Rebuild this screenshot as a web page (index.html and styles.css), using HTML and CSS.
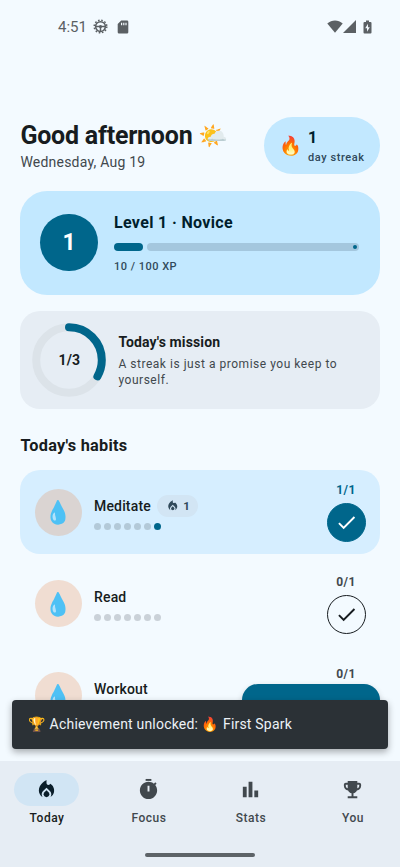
FILE: index.html
```html
<!DOCTYPE html>
<html lang="en">
<head>
<meta charset="utf-8">
<title>Today</title>
<link rel="stylesheet" href="styles.css">
</head>
<body>
<svg class="defs" width="0" height="0">
  <symbol id="fire" viewBox="0 0 24 24"><path d="M12 12.9l-2.13 2.09c-.56.56-.87 1.29-.87 2.07C9 18.68 10.35 20 12 20s3-1.32 3-2.94c0-.78-.31-1.52-.87-2.07L12 12.9z"/><path d="M16 6l-.44.55C14.38 8.02 12 7.19 12 5.3V2S4 6 4 13c0 2.92 1.56 5.47 3.89 6.86-.56-.79-.89-1.76-.89-2.8 0-1.32.52-2.56 1.47-3.5L12 10.1l3.53 3.47c.95.93 1.47 2.17 1.47 3.5 0 1.02-.31 1.96-.85 2.75 1.89-1.15 3.29-3.06 3.71-5.3.66-3.55-1.07-6.9-3.86-8.52z"/></symbol>
  <symbol id="check" viewBox="0 0 24 24"><path d="M9 16.17L4.83 12l-1.42 1.41L9 19 21 7l-1.41-1.41z"/></symbol>
</svg>
<div class="screen">
  <header class="status">
    <span class="clock">4:51</span>
    <svg class="gear" viewBox="0 0 16 16"><circle cx="8" cy="8" r="5.2" fill="none" stroke="currentColor" stroke-width="1.6"/><circle cx="8" cy="8" r="6.7" fill="none" stroke="currentColor" stroke-width="1.6" stroke-dasharray="1.7 1.808"/><path d="M3 7.2h10v1.6H8.800v4.400H7.200V8.800H3z"/><circle cx="8" cy="8" r="1.7"/></svg>
    <svg class="sd" viewBox="0 0 12 14"><path fill-rule="evenodd" d="M4.2.5H10A1.3 1.3 0 0 1 11.300 1.800V12.200A1.300 1.300 0 0 1 10 13.500H2A1.300 1.300 0 0 1 .7 12.200V4zM4 2.800V5.200H5.200V2.800zM6.200 2.800V5.200H7.400V2.800zM8.400 2.800V5.200H9.600V2.800z"/></svg>
    <span class="grow"></span>
    <svg class="wifi" viewBox="0 0 16 13"><path d="M.3 3.400C4.800-.5 11.200-.5 15.700 3.400L8 12.800z"/></svg>
    <svg class="signal" viewBox="0 0 13 13"><path d="M13 0V13H0z"/></svg>
    <svg class="battery" viewBox="0 0 9 14"><path fill-rule="evenodd" d="M3 .5H6V2H7.500A1 1 0 0 1 8.500 3V12.500A1 1 0 0 1 7.500 13.500H1.500A1 1 0 0 1 .5 12.500V3A1 1 0 0 1 1.500 2H3zM5 3.800L2.200 8.300H4V11.700L6.800 7.200H5z"/></svg>
  </header>
  <main class="content">
    <section class="greeting">
      <div>
        <h1>Good afternoon <span class="emoji">🌤️</span></h1>
        <p class="date">Wednesday, Aug 19</p>
      </div>
      <div class="streak">
        <span class="emoji streak-fire">🔥</span>
        <div><div class="streak-num">1</div><div class="streak-label">day streak</div></div>
      </div>
    </section>
    <section class="level">
      <div class="level-badge">1</div>
      <div class="level-info">
        <h2>Level 1 · Novice</h2>
        <div class="bar"><span class="bar-fill"></span><span class="bar-track"><i></i></span></div>
        <p class="xp">10 / 100 XP</p>
      </div>
    </section>
    <section class="mission">
      <div class="ring">
        <svg viewBox="0 0 74 74"><circle class="ring-track" cx="37" cy="37" r="32.800"/><circle class="ring-fill" cx="37" cy="37" r="32.800" pathLength="3" stroke-dasharray="1 2" transform="rotate(-90 37 37)"/></svg>
        <span>1/3</span>
      </div>
      <div class="mission-text">
        <h3>Today's mission</h3>
        <p>A streak is just a promise you keep to yourself.</p>
      </div>
    </section>
    <h2 class="habits-title">Today's habits</h2>
    <section class="habits">
      <article class="habit done">
        <div class="avatar emoji">💧</div>
        <div class="habit-main">
          <div class="habit-name">Meditate <span class="chip"><svg><use href="#fire"/></svg>1</span></div>
          <div class="dots"><i></i><i></i><i></i><i></i><i></i><i></i><i class="on"></i></div>
        </div>
        <div class="habit-side"><span>1/1</span><div class="tick"><svg><use href="#check"/></svg></div></div>
      </article>
      <article class="habit">
        <div class="avatar emoji">💧</div>
        <div class="habit-main">
          <div class="habit-name">Read</div>
          <div class="dots"><i></i><i></i><i></i><i></i><i></i><i></i><i></i></div>
        </div>
        <div class="habit-side"><span>0/1</span><div class="tick"><svg><use href="#check"/></svg></div></div>
      </article>
      <article class="habit">
        <div class="avatar emoji">💧</div>
        <div class="habit-main">
          <div class="habit-name">Workout</div>
          <div class="dots"><i></i><i></i><i></i><i></i><i></i><i></i><i></i></div>
        </div>
        <div class="habit-side"><span>0/1</span></div>
      </article>
    </section>
    <div class="fab"></div>
    <div class="snackbar"><span class="emoji">🏆</span> Achievement unlocked: <span class="emoji">🔥</span> First Spark</div>
  </main>
  <nav class="nav">
    <div class="tabs">
      <a class="tab active"><span class="pill"><svg><use href="#fire"/></svg></span>Today</a>
      <a class="tab"><span class="pill"><svg viewBox="0 0 24 24"><path d="M9 1h6v2H9z"/><path d="M19.030 7.390l1.420-1.420c-.43-.51-.9-.99-1.410-1.410l-1.420 1.420C16.070 4.740 14.120 4 12 4c-4.970 0-9 4.030-9 9s4.020 9 9 9 9-4.030 9-9c0-2.120-.74-4.070-1.970-5.610zM13 14h-2V8h2v6z"/></svg></span>Focus</a>
      <a class="tab"><span class="pill"><svg viewBox="0 0 24 24"><path d="M4 9h4v11H4zM16 13h4v7h-4zM10 4h4v16h-4z"/></svg></span>Stats</a>
      <a class="tab"><span class="pill"><svg viewBox="0 0 24 24"><path d="M19 5h-2V3H7v2H5c-1.100 0-2 .9-2 2v1c0 2.550 1.920 4.630 4.390 4.940.63 1.500 1.980 2.630 3.610 2.960V19H7v2h10v-2h-4v-3.100c1.630-.33 2.980-1.460 3.610-2.960C19.080 12.630 21 10.550 21 8V7c0-1.100-.9-2-2-2zM5 8V7h2v3.820C5.840 10.400 5 9.300 5 8zm14 0c0 1.300-.84 2.400-2 2.820V7h2v1z"/></svg></span>You</a>
    </div>
    <div class="handle"></div>
  </nav>
</div>
</body>
</html>
```
FILE: styles.css
```css
* { box-sizing: border-box; margin: 0; padding: 0; }
body { font-family: Roboto, "Liberation Sans", sans-serif; color: #171c20; background: #f3faff; }
svg { fill: currentColor; display: block; }
.defs { position: absolute; }
.emoji { font-family: "Noto Color Emoji", Roboto, sans-serif; }
.screen { width: 400px; height: 867px; display: flex; flex-direction: column; overflow: hidden; }

.status { height: 53px; flex: none; display: flex; align-items: center; padding: 0 28px 0 58px; color: #5b6064; }
.clock { font-size: 15px; width: 34.500px; line-height: 18px; }
.gear { width: 15px; height: 15px; }
.sd { width: 12px; height: 14px; margin-left: 9px; }
.grow { flex: 1; }
.wifi { width: 16px; height: 13px; }
.signal { width: 13px; height: 13px; margin-left: 0; }
.battery { width: 9px; height: 14px; margin-left: 7px; }

.content { flex: 1; min-height: 0; position: relative; padding: 64px 20.400px 0; overflow: hidden; }
.greeting { display: flex; justify-content: space-between; height: 57px; }
h1 { font-size: 25px; line-height: 31px; font-weight: 700; letter-spacing: -.23px; margin-top: 2.500px; white-space: nowrap; }
h1 .emoji { font-size: 24px; }
.date { font-size: 14px; line-height: 20px; color: #41484d; letter-spacing: .22px; margin-top: .500px; }
.streak { width: 116px; height: 57px; border-radius: 28.500px; background: #c2e8ff; display: flex; align-items: center; padding-left: 15.500px; gap: 8px; }
.streak-fire { font-size: 18.500px; width: 21px; }
.streak-num { font-size: 16px; line-height: 22px; font-weight: 700; color: #001e2c; padding-top: 1px; }
.streak-label { font-size: 11px; line-height: 17px; font-weight: 500; letter-spacing: .55px; color: #30495a; white-space: nowrap; }

.level { height: 104px; margin-top: 16.500px; border-radius: 27px; background: #c2e8ff; display: flex; align-items: center; padding: 0 21px 0 20px; gap: 16px; color: #001e2c; }
.level-badge { width: 57.500px; height: 57.500px; border-radius: 50%; background: #00668b; color: #fff; font-size: 23px; font-weight: 700; display: grid; place-items: center; }
.level-info { flex: 1; }
.level h2 { font-size: 16px; line-height: 23px; font-weight: 700; letter-spacing: .35px; }
.bar { display: flex; gap: 4px; margin: 9px 0 8px; }
.bar-fill { width: 29px; height: 8px; border-radius: 4px; background: #00668b; }
.bar-track { flex: 1; height: 8px; border-radius: 4px; background: #a4c7de; display: flex; justify-content: flex-end; align-items: center; padding-right: 2px; }
.bar-track i { width: 4px; height: 4px; border-radius: 50%; background: #00668b; }
.xp { font-size: 11px; line-height: 15px; font-weight: 500; letter-spacing: .5px; color: #30495a; }

.mission { height: 98px; margin-top: 16.200px; border-radius: 20px; background: #e6edf4; display: flex; align-items: center; padding: 0 12px; gap: 12px; }
.ring { width: 74px; height: 74px; display: grid; place-items: center; flex: none; font-size: 14px; font-weight: 700; letter-spacing: .2px; }
.ring > * { grid-area: 1 / 1; }
.ring svg { width: 74px; height: 74px; }
.ring circle { fill: none; stroke-width: 8; stroke: #dce3e9; }
.ring .ring-fill { stroke: #00668b; stroke-linecap: round; }
.mission h3 { font-size: 14px; line-height: 20px; font-weight: 700; letter-spacing: .13px; }
.mission p { font-size: 12px; line-height: 16px; letter-spacing: .53px; color: #41484d; margin-top: 4px; }

.habits-title { font-size: 16.300px; line-height: 24px; font-weight: 700; letter-spacing: .25px; margin-top: 25px; }
.habits { margin-top: 12.500px; display: flex; flex-direction: column; gap: 8px; }
.habit { height: 83.800px; flex: none; border-radius: 20px; display: flex; align-items: center; padding: 0 14px 0 14.600px; }
.habit.done { background: #d6eeff; }
.avatar { width: 47px; height: 47px; border-radius: 50%; background: #f0ddd2; display: grid; place-items: center; font-size: 22.500px; }
.done .avatar { background: #dad4d2; }
.habit-main { margin-left: 12px; flex: 1; }
.habit-name { height: 22px; font-size: 14px; font-weight: 500; letter-spacing: .17px; display: flex; align-items: center; gap: 6.500px; }
.chip { height: 22px; width: 41px; border-radius: 11px; background: #d2e5f4; display: flex; align-items: center; justify-content: center; gap: 4px; font-size: 11.500px; font-weight: 700; color: #30495a; }
.chip svg { width: 13.500px; height: 13.500px; }
.dots { display: flex; gap: 3px; margin-top: 6px; }
.dots i { width: 7px; height: 7px; border-radius: 50%; background: #cad1d8; }
.done .dots i { background: #b3c9d8; }
.done .dots .on { background: #00668b; }
.habit-side { height: 84px; width: 39px; padding-top: 12px; display: flex; flex-direction: column; align-items: center; font-size: 12px; line-height: 16px; font-weight: 700; letter-spacing: .5px; color: #41484d; }
.done .habit-side { color: #00668b; }
.tick { width: 39px; height: 39px; margin-top: 5px; border: 1px solid #171c20; border-radius: 50%; display: grid; place-items: center; color: #171c20; flex: none; }
.done .tick { background: #00668b; border-color: #00668b; color: #fff; }
.tick svg { width: 23px; height: 23px; }

.fab { position: absolute; right: 20.400px; bottom: 23px; width: 138px; height: 54px; border-radius: 16px; background: #00668b; box-shadow: 0 3px 6px rgba(0,0,0,.2); }
.snackbar { position: absolute; left: 12px; right: 12px; bottom: 12px; height: 49px; border-radius: 4px; background: #2b3136; color: #edf1f6; box-shadow: 0 3px 7px rgba(0,0,0,.32); padding-left: 16.500px; font-size: 14px; line-height: 49px; letter-spacing: .2px; white-space: pre; }
.snackbar .emoji { font-size: 14px; letter-spacing: 0; }

.nav { height: 106px; flex: none; background: #e6edf4; position: relative; display: flex; flex-direction: column; align-items: center; color: #41484d; }
.tabs { width: 100%; display: grid; grid-template-columns: repeat(4, 94px); justify-content: space-between; height: 93px; padding-top: 12px; }
.tab { display: flex; flex-direction: column; align-items: center; font-size: 12px; line-height: 16px; font-weight: 500; letter-spacing: .5px; gap: 4px; }
.pill { width: 65px; height: 33px; border-radius: 17px; display: grid; place-items: center; margin-right: 1.500px; }
.pill svg { width: 23px; height: 23px; }
.active { color: #171c20; }
.active .pill { background: #d1e5f4; color: #0a1e2a; }
.handle { width: 110px; height: 4px; border-radius: 2px; background: #5d6367; margin-top: -1px; }
```
